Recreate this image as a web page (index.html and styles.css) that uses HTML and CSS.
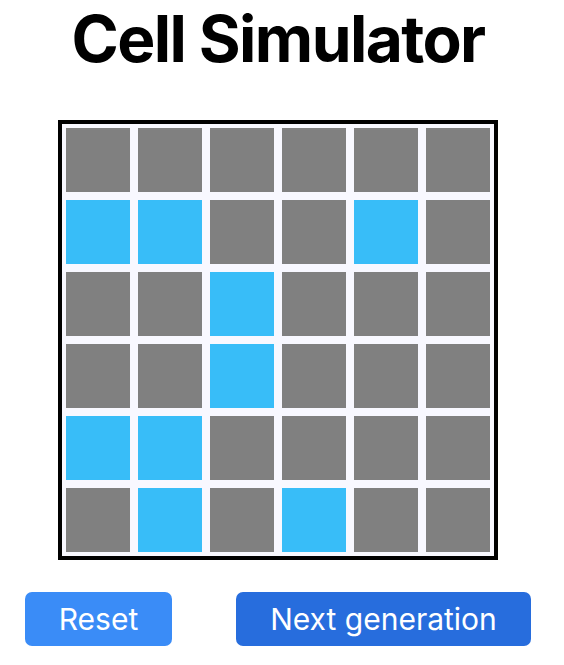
FILE: index.html
```html
<!DOCTYPE html>
<html>
<head>
<meta charset="utf-8">
<link rel="stylesheet" href="styles.css">
</head>
<body>
<div class="app">
  <h1 class="title">Cell Simulator</h1>
  <div class="board">
    <div class="cell"></div><div class="cell"></div><div class="cell"></div><div class="cell"></div><div class="cell"></div><div class="cell"></div>
    <div class="cell on"></div><div class="cell on"></div><div class="cell"></div><div class="cell"></div><div class="cell on"></div><div class="cell"></div>
    <div class="cell"></div><div class="cell"></div><div class="cell on"></div><div class="cell"></div><div class="cell"></div><div class="cell"></div>
    <div class="cell"></div><div class="cell"></div><div class="cell on"></div><div class="cell"></div><div class="cell"></div><div class="cell"></div>
    <div class="cell on"></div><div class="cell on"></div><div class="cell"></div><div class="cell"></div><div class="cell"></div><div class="cell"></div>
    <div class="cell"></div><div class="cell on"></div><div class="cell"></div><div class="cell on"></div><div class="cell"></div><div class="cell"></div>
  </div>
  <div class="controls">
    <button class="btn reset">Reset</button>
    <button class="btn next">Next generation</button>
  </div>
</div>
</body>
</html>
```

FILE: styles.css
```css
html, body {
  margin: 0;
  padding: 0;
  background: #ffffff;
}
body {
  font-family: Inter, "Noto Sans", sans-serif;
}
.app {
  width: 556px;
  display: flex;
  flex-direction: column;
  align-items: center;
}
.title {
  margin: 0;
  font-size: 64px;
  font-weight: 700;
  line-height: 78px;
  letter-spacing: -1.6px;
  padding-bottom: 2px;
  color: #000;
}
.board {
  margin-top: 40px;
  border: 4px solid #000;
  padding: 4px;
  background: #f8f8ff;
  display: grid;
  grid-template-columns: repeat(6, 64px);
  grid-auto-rows: 64px;
  gap: 8px;
}
.cell {
  background: #808080;
}
.cell.on {
  background: #38bdf8;
}
.controls {
  margin-top: 32px;
  display: flex;
  gap: 64px;
}
.btn {
  font-family: Inter, "Noto Sans", sans-serif;
  font-size: 30px;
  font-weight: 400;
  color: #fff;
  border: none;
  border-radius: 7px;
  height: 54px;
  padding: 0 33px;
  line-height: 36px;
}
.reset {
  background: #3a8cf7;
  width: 147px;
}
.next {
  background: #276ddd;
  width: 295px;
}
```
